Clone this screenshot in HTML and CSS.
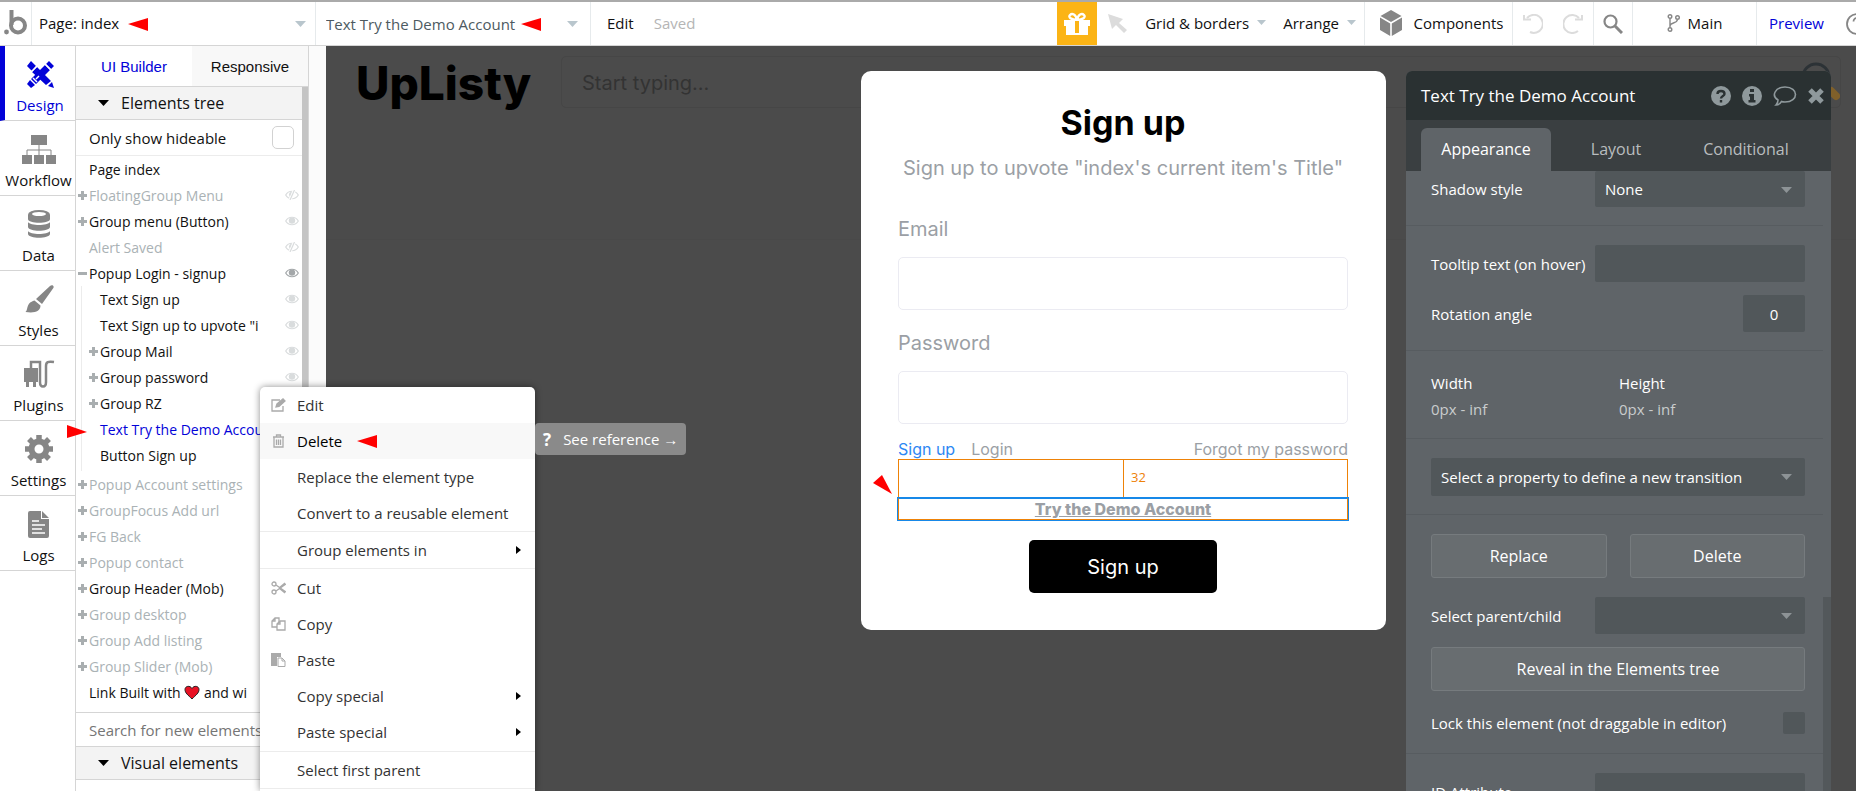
FILE: index.html
```html
<!DOCTYPE html>
<html lang="en">
<head>
<meta charset="utf-8">
<title>UpListy editor</title>
<link rel="stylesheet" href="styles.css">
</head>
<body>
<svg class="sprite" aria-hidden="true">
  <symbol id="caret" viewBox="0 0 11 6"><path d="M0 0h11L5.5 6z"/></symbol>
  <symbol id="marker" viewBox="0 0 20 13"><path d="M0 6 20 0v13z"/></symbol>
  <symbol id="plus" viewBox="0 0 9 9"><path d="M3 0h3v3h3v3H6v3H3V6H0V3h3z"/></symbol>
  <symbol id="minus" viewBox="0 0 9 9"><path d="M0 3h9v3H0z"/></symbol>
  <symbol id="eye" viewBox="0 0 14 10"><path d="M.7 5C3.500 0 10.500 0 13.300 5 10.500 10 3.500 10 .7 5z" fill="none" stroke="currentColor" stroke-width="1.200"/><circle cx="7" cy="4.600" r="3.200"/></symbol>
  <symbol id="eye-off" viewBox="0 0 14 10"><path d="M.7 5C3.500 0 10.500 0 13.300 5 10.500 10 3.500 10 .7 5z" fill="none" stroke="currentColor" stroke-width="1.200"/><path d="M4 4.500A3 3 0 0 1 7 1.800L6 7.500A3 3 0 0 1 4 4.500z"/><path d="M9.500 0 5 10" stroke="#fff" stroke-width="3"/><path d="M9.500 0 5 10" stroke="currentColor" stroke-width="1.200"/></symbol>
  <symbol id="sub" viewBox="0 0 5 8"><path d="M0 0l5 4-5 4z"/></symbol>
</svg>

<div class="app">
  <header class="topbar">
    <div class="logo">
      <svg width="24" height="26" viewBox="0 0 24 26"><circle cx="2.500" cy="22" r="2.400" fill="#868686"/><path d="M7.500 0v15" stroke="#868686" stroke-width="4" fill="none"/><circle cx="14" cy="15.500" r="7" stroke="#868686" stroke-width="4" fill="none"/></svg>
    </div>
    <div class="pick pick-page">
      <select aria-label="Page"><option>Page: index</option></select>
      <svg class="caret"><use href="#caret"/></svg>
      <svg class="marker"><use href="#marker"/></svg>
    </div>
    <div class="pick pick-element">
      <select aria-label="Element"><option>Text Try the Demo Account</option></select>
      <svg class="caret"><use href="#caret"/></svg>
      <svg class="marker"><use href="#marker"/></svg>
    </div>
    <div class="edit-group">
      <button>Edit</button>
      <span class="saved">Saved</span>
    </div>
    <div class="tools">
      <button class="gift" aria-label="Gift">
        <svg width="28" height="24" viewBox="0 0 28 24"><path fill="#fff" d="M1 8h26v6H1zM3 14h22v9H3z"/><path d="M14 8C8 8 5 5 7 3s6-1 7 5c1-6 5-7 7-5s-1 5-7 5z" fill="none" stroke="#fff" stroke-width="2.400"/><path d="M12 9h4v12h-4z" fill="#fbb416"/></svg>
      </button>
      <button class="cursor" aria-label="Select"><svg width="19" height="19" viewBox="0 0 19 19"><path fill="#dcdcdc" d="M0 0l15 5-4 4 8 7-3 3-8-8-4 4z"/></svg></button>
      <button class="menu-btn">Grid &amp; borders <svg class="small-caret"><use href="#caret"/></svg></button>
      <button class="menu-btn">Arrange <svg class="small-caret"><use href="#caret"/></svg></button>
      <button class="seg components">
        <svg width="22" height="26" viewBox="0 0 22 26"><path fill="#868686" d="M11 0l10.500 6L11 12 .5 6z"/><path fill="#868686" d="M0 7.500l10.200 6V26L0 20zM22 7.500l-10.200 6V26L22 20z"/></svg>
        Components</button>
      <div class="seg history">
        <button aria-label="Undo"><svg width="20" height="20" viewBox="0 0 20 20" fill="none" stroke="#dcdcdc" stroke-width="2"><path d="M4 4a9 9 0 1 1 3 14"/><path d="M1 1v4.500h7"/></svg></button>
        <button aria-label="Redo"><svg width="20" height="20" viewBox="0 0 20 20" fill="none" stroke="#dcdcdc" stroke-width="2"><path d="M16 4a9 9 0 1 0-1 13"/><path d="M19 1v4.500h-7"/></svg></button>
      </div>
      <button class="seg find" aria-label="Search"><svg width="20" height="20" viewBox="0 0 20 20" fill="none" stroke="#868686"><circle cx="7.500" cy="7.500" r="6" stroke-width="2.200"/><path d="M12 12l7 7" stroke-width="3"/></svg></button>
      <button class="seg branch"><svg width="13" height="18" viewBox="0 0 13 18" fill="none" stroke="#868686" stroke-width="1.400"><circle cx="3" cy="2.500" r="1.800"/><circle cx="3" cy="15.500" r="1.800"/><circle cx="10.500" cy="3.500" r="1.800"/><path d="M3 4.500v9M3 12c0-4 7-2 7.500-6.500"/></svg>Main</button>
      <a class="seg preview" href="#">Preview</a>
      <button class="help" aria-label="Help"><svg width="22" height="22" viewBox="0 0 22 22" fill="none" stroke="#868686" stroke-width="1.800"><circle cx="11" cy="11" r="10"/><path d="M7.500 8.500c0-5 7-4 7 0 0 2.500-3.500 2.500-3.500 5M11 15v2"/></svg></button>
    </div>
  </header>

  <div class="main">
    <nav class="rail">
      <a class="active" href="#"><span class="ico"><svg width="29" height="29" viewBox="0 0 29 29"><g fill="#0202d8"><path d="M5 1l5 5-4 5-5-5zM11 7l14 14-5 4L6 12zM26 22l2 6-6-2z"/><path d="M23 1l5 5-3 3-5-5zM19 5l5 5-14 14-5-5zM4 20l5 5-4 3-4-4z"/></g><path d="M7 18l4 4M10 19l3-3M19.500 4.500l5 5M5.500 11.500l5-5" stroke="#fff" stroke-width="1.500"/></svg></span>Design</a>
      <a href="#"><span class="ico"><svg width="34" height="29" viewBox="0 0 34 29" fill="#868686"><path d="M9 0h16v10H9zM0 20h10v9H0zM12 20h10v9H12zM24 20h10v9H24z"/><path d="M17 10v10M5 20v-5h24v5" fill="none" stroke="#868686"/></svg></span>Workflow</a>
      <a href="#"><span class="ico"><svg width="22" height="28" viewBox="0 0 22 28" fill="#868686"><path d="M0 5v4c0 5 22 5 22 0V5z"/><ellipse cx="11" cy="4.500" rx="11" ry="4.500"/><ellipse cx="11" cy="4" rx="7" ry="2" fill="#fff"/><path d="M0 12c2 4 20 4 22 0v5c-1 5-21 5-22 0zM0 21c2 4 20 4 22 0v3c-1 5-21 5-22 0z"/></svg></span>Data</a>
      <a href="#"><span class="ico"><svg width="30" height="28" viewBox="0 0 30 28" fill="#868686"><path d="M12 14L26 1c2-2 5 0 3 2.500L18 19zM10.500 15.500l6 5c0 6-6 8-15 6.500 3-2 0-9 9-11.500z"/></svg></span>Styles</a>
      <a href="#"><span class="ico"><svg width="32" height="28" viewBox="0 0 32 28" fill="#868686"><path d="M1 8h14v14H1zM3 20h3v7H3zM10 20h3v7h-3z"/><path d="M8 9V2h9v20c0 6 6 6 6 0V6c0-4 2-5 8-4" fill="none" stroke="#868686" stroke-width="2.500"/></svg></span>Plugins</a>
      <a href="#"><span class="ico"><svg width="28" height="28" viewBox="0 0 28 28"><circle cx="14" cy="14" r="7.500" fill="none" stroke="#868686" stroke-width="6"/><path d="M14 0v5M14 23v5M0 14h5M23 14h5M4 4l4 4M20 20l4 4M24 4l-4 4M8 20l-4 4" stroke="#868686" stroke-width="5.500"/></svg></span>Settings</a>
      <a href="#"><span class="ico"><svg width="21" height="27" viewBox="0 0 21 27" fill="#868686"><path d="M2 0h11v8h8v17a2 2 0 0 1-2 2H2a2 2 0 0 1-2-2V2a2 2 0 0 1 2-2zM14 0l7 7h-7z"/><path d="M4 10h7M4 14h13M4 18h10M4 22h13" stroke="#fff" stroke-width="1.600"/></svg></span>Logs</a>
      <svg class="marker"><use href="#marker"/></svg>
    </nav>

    <aside class="side">
      <div class="side-tabs">
        <button class="on">UI Builder</button>
        <button>Responsive</button>
      </div>
      <div class="side-body">
        <button class="section"><svg><use href="#caret"/></svg>Elements tree</button>
        <label class="hideable">Only show hideable<input type="checkbox"></label>
        <ul class="tree">
          <li>Page index</li>
          <li class="dim"><svg class="tog"><use href="#plus"/></svg>FloatingGroup Menu<svg class="eye"><use href="#eye-off"/></svg></li>
          <li><svg class="tog"><use href="#plus"/></svg>Group menu (Button)<svg class="eye"><use href="#eye"/></svg></li>
          <li class="dim">Alert Saved<svg class="eye"><use href="#eye-off"/></svg></li>
          <li><svg class="tog"><use href="#minus"/></svg>Popup Login - signup<svg class="eye strong"><use href="#eye"/></svg></li>
        </ul>
        <ul class="tree children">
          <li>Text Sign up<svg class="eye"><use href="#eye"/></svg></li>
          <li>Text Sign up to upvote "i<svg class="eye"><use href="#eye"/></svg></li>
          <li><svg class="tog"><use href="#plus"/></svg>Group Mail<svg class="eye"><use href="#eye"/></svg></li>
          <li><svg class="tog"><use href="#plus"/></svg>Group password<svg class="eye"><use href="#eye"/></svg></li>
          <li><svg class="tog"><use href="#plus"/></svg>Group RZ</li>
          <li class="selected">Text Try the Demo Accou</li>
          <li>Button Sign up</li>
        </ul>
        <ul class="tree">
          <li class="dim"><svg class="tog"><use href="#plus"/></svg>Popup Account settings</li>
          <li class="dim"><svg class="tog"><use href="#plus"/></svg>GroupFocus Add url</li>
          <li class="dim"><svg class="tog"><use href="#plus"/></svg>FG Back</li>
          <li class="dim"><svg class="tog"><use href="#plus"/></svg>Popup contact</li>
          <li><svg class="tog"><use href="#plus"/></svg>Group Header (Mob)</li>
          <li class="dim"><svg class="tog"><use href="#plus"/></svg>Group desktop</li>
          <li class="dim"><svg class="tog"><use href="#plus"/></svg>Group Add listing</li>
          <li class="dim"><svg class="tog"><use href="#plus"/></svg>Group Slider (Mob)</li>
          <li>Link Built with <svg class="heart" viewBox="0 0 16 15"><path d="M8 14C4 10 1 8 1 4.500 1 1 6 0 8 3.500 10 0 15 1 15 4.500 15 8 12 10 8 14z" fill="#e81224" stroke="#222"/></svg> and wi</li>
        </ul>
        <input class="new-search" type="text" placeholder="Search for new elements" aria-label="Search for new elements">
        <button class="section"><svg><use href="#caret"/></svg>Visual elements</button>
        <div class="visual"><svg width="16" height="12" viewBox="0 0 16 12"><path d="M0 4V0h16v4h-2V2H9v10H7V2H2v2z" fill="#777"/></svg></div>
      </div>
    </aside>

    <main class="canvas">
      <div class="page-head">
        <div class="brand">UpListy</div>
        <div class="page-search">Start typing...
          <svg width="42" height="46" viewBox="0 0 42 46" fill="none"><circle cx="18" cy="20" r="13" stroke="#2c3236" stroke-width="3"/><path d="M33 34l5 5" stroke="#80602a" stroke-width="8" stroke-linecap="round"/></svg>
        </div>
      </div>

      <form class="popup">
        <h1>Sign up</h1>
        <p class="lead">Sign up to upvote "index's current item's Title"</p>
        <label for="email">Email</label>
        <input id="email" type="email">
        <label for="password">Password</label>
        <input id="password" type="password">
        <div class="links">
          <a class="blue" href="#">Sign up</a><a href="#">Login</a><a class="forgot" href="#">Forgot my password</a>
        </div>
        <div class="spacing"><span></span><span class="gap-size">32</span></div>
        <div class="demo"><a href="#">Try the Demo Account</a></div>
        <button class="submit" type="button">Sign up</button>
        <svg class="popup-marker" viewBox="0 0 20 19"><path d="M0 8 9 0 19 19z"/></svg>
      </form>

      <section class="props">
        <header>
          <h2>Text Try the Demo Account</h2>
          <button aria-label="Help"><svg width="20" height="20" viewBox="0 0 20 20"><circle cx="10" cy="10" r="10"/><path d="M6.500 8c0-4 7-4 7 0 0 2-3.500 2-3.500 4.500M10 14v2.500" fill="none" stroke="#2a3132" stroke-width="2.400"/></svg></button>
          <button aria-label="Info"><svg width="20" height="20" viewBox="0 0 20 20"><circle cx="10" cy="10" r="10"/><path d="M8 3h4v3H8zM7 8h5v6h1.500v2.500h-7V14H8v-3.500H7z" fill="#2a3132"/></svg></button>
          <button aria-label="Comment"><svg width="24" height="20" viewBox="0 0 24 20"><path d="M12 1c14 0 14 15 0 15-1.500 0-2.500 0-3.500-.5C7 18 5 19 3 19c1.500-1.500 2-3 2-5C-2 10 2 1 12 1z" fill="none" stroke="#8f999c" stroke-width="1.600"/></svg></button>
          <button aria-label="Close"><svg width="16" height="16" viewBox="0 0 16 16"><path d="M2 2l12 12M14 2L2 14" stroke="#8f999c" stroke-width="5"/></svg></button>
        </header>
        <div class="props-tabs">
          <button class="on">Appearance</button>
          <button>Layout</button>
          <button>Conditional</button>
        </div>
        <div class="props-body">
          <div class="group first">
            <div class="row"><label for="shadow">Shadow style</label><div class="sel"><select id="shadow"><option>None</option></select><svg><use href="#caret"/></svg></div></div>
          </div>
          <div class="group">
            <div class="row"><label for="tip">Tooltip text (on hover)</label><input id="tip" type="text"></div>
            <div class="row"><label for="rot">Rotation angle</label><input id="rot" class="num" type="text" value="0"></div>
          </div>
          <div class="group sizes">
            <div><b>Width</b><span>0px - inf</span></div>
            <div><b>Height</b><span>0px - inf</span></div>
          </div>
          <div class="group">
            <div class="sel wide"><select aria-label="Transition"><option>Select a property to define a new transition</option></select><svg><use href="#caret"/></svg></div>
          </div>
          <div class="group actions">
            <div class="pair"><button class="btn">Replace</button><button class="btn">Delete</button></div>
            <div class="row after-buttons"><label for="rel">Select parent/child</label><div class="sel"><select id="rel"><option></option></select><svg><use href="#caret"/></svg></div></div>
            <button class="btn reveal">Reveal in the Elements tree</button>
            <div class="row lock"><label for="lock">Lock this element (not draggable in editor)</label><input id="lock" type="checkbox"></div>
          </div>
          <div class="group last">
            <div class="row"><label for="attr">ID Attribute</label><input id="attr" type="text"></div>
          </div>
        </div>
      </section>
    </main>

    <div class="context" role="menu">
      <div class="block">
        <button><svg class="mi" viewBox="0 0 15 14" fill="none" stroke="#aaa" stroke-width="1.300"><path d="M12 8v5H1V2h8"/><path d="M5 9l1-3 6-5 2 2-6 5.500z" fill="#aaa"/></svg>Edit</button>
        <button class="hover"><svg class="mi" viewBox="0 0 15 14" fill="none" stroke="#aaa" stroke-width="1.300"><path d="M2 3h11M3 3v10h9V3M5.500 3V1h4v2M5.500 5.500v5.500M7.500 5.500v5.500M9.500 5.500v5.500"/></svg>Delete<svg class="marker"><use href="#marker"/></svg></button>
        <button>Replace the element type</button>
        <button>Convert to a reusable element</button>
      </div>
      <div class="block">
        <button>Group elements in<svg class="sub"><use href="#sub"/></svg></button>
      </div>
      <div class="block">
        <button><svg class="mi" viewBox="0 0 15 14" fill="none" stroke="#aaa" stroke-width="1.300"><circle cx="3" cy="3" r="2"/><circle cx="3" cy="11" r="2"/><path d="M5 4l10 7M5 10l10-7M8 7l6-5M8 7l6 5"/></svg>Cut</button>
        <button><svg class="mi" viewBox="0 0 15 14" fill="none" stroke="#aaa" stroke-width="1.300"><path d="M6 10H1V4l3-3h4v4M1 4h3V1"/><path d="M6 13V7l3-3h5v9zM6 7h3V4"/></svg>Copy</button>
        <button><svg class="mi" viewBox="0 0 15 14"><path d="M0 0h10v4H6v9H0z" fill="#aaa"/><path d="M7 5h4l3 3v5.500H7zM11 5v3h3" fill="#fff" stroke="#aaa"/></svg>Paste</button>
        <button>Copy special<svg class="sub"><use href="#sub"/></svg></button>
        <button>Paste special<svg class="sub"><use href="#sub"/></svg></button>
      </div>
      <div class="block">
        <button>Select first parent</button>
      </div>
      <a class="reference" href="#"><b>?</b>See reference →</a>
    </div>
  </div>
</div>
</body>
</html>
```

FILE: styles.css
```css
* { box-sizing: border-box; }
body { margin: 0; font-family: "Open Sans", "Noto Sans", sans-serif; font-size: 15px; color: #111; overflow: hidden; }
button, select, input { font: inherit; color: inherit; }
button { background: none; border: 0; padding: 0; cursor: pointer; }
select { appearance: none; background: none; border: 0; padding: 0; border-radius: 0; }
a { color: inherit; text-decoration: none; }
ul { list-style: none; margin: 0; padding: 0; }
.sprite { display: none; }
svg { flex: none; }
.marker { width: 20px; height: 13px; fill: #f00; }
.app { height: 100vh; display: flex; flex-direction: column; }

/* top bar */
.topbar { display: flex; flex: none; height: 46px; border-top: 2px solid #aaa; border-bottom: 1px solid #d5d5d5; background: #fff; }
.logo { width: 32px; padding: 8px 4px; border-right: 1px solid #e6eaec; }
.pick { position: relative; border-right: 1px solid #e6eaec; }
.pick select { width: 100%; height: 100%; padding: 0 7px 2px; }
.pick .caret { position: absolute; right: 9px; top: 19px; width: 11px; height: 6px; fill: #b9c6cd; pointer-events: none; }
.pick .marker { position: absolute; top: 16px; }
.pick-page { width: 284px; }
.pick-page .marker { left: 96px; }
.pick-element { width: 275px; color: #4d5a61; }
.pick-element select { padding: 0 10px; }
.pick-element .caret { right: 12px; }
.pick-element .marker { left: 205px; }
.edit-group { display: flex; align-items: center; gap: 20px; padding: 0 0 2px 16px; }
.saved { color: #b5b5b5; }
.tools { display: flex; margin-left: auto; white-space: nowrap; }
.tools > * { display: flex; align-items: center; }
.gift { width: 40px; justify-content: center; background: #fbb416; }
.cursor { padding: 0 18px 0 11px; }
.menu-btn { gap: 8px; padding: 0 17px 2px 0; }
.menu-btn + .menu-btn { padding-right: 8px; }
.small-caret { width: 9px; height: 5px; fill: #b9c6cd; }
.seg { border-left: 1px solid #e6eaec; justify-content: center; }
.components { gap: 12px; width: 148px; padding: 0 0 2px 6px; }
.history { gap: 20px; width: 81px; }
.history svg { display: block; }
.find { width: 39px; }
.branch { gap: 8px; width: 124px; padding-bottom: 2px; }
.preview { width: 90px; padding: 0 10px 2px 0; color: #0202d8; }
.help { width: 10px; overflow: hidden; justify-content: flex-start; }

.main { position: relative; display: flex; flex: 1; min-height: 0; background: #fbfbfb; }

/* left rail */
.rail { position: relative; flex: none; width: 76px; border-right: 1px solid #d5d5d5; background: #fff; }
.rail a { display: flex; flex-direction: column; align-items: center; height: 75px; padding: 12px 0 0 2px; border-bottom: 1px solid #d5d5d5; line-height: 20px; }
.rail a.active { border-left: 5px solid #0202d8; color: #0202d8; padding-left: 0; }
.rail .ico { display: grid; place-items: center; height: 32px; margin-bottom: 5px; }
.rail .marker { position: absolute; left: 67px; top: 379px; transform: rotate(180deg); z-index: 2; }

/* elements panel */
.side { flex: none; width: 233px; border-right: 1px solid #d5d5d5; display: flex; flex-direction: column; overflow: hidden; background: #fff; }
.side-tabs { display: grid; grid-template-columns: 1fr 1fr; flex: none; height: 41px; border-bottom: 1px solid #d5d5d5; font-family: "Liberation Sans", Arial, sans-serif; }
.side-tabs button { background: #f8f8f8; }
.side-tabs .on { background: #fff; color: #0202d8; }
.side-body { flex: 1; border-right: 6px solid #c4c4c4; }
.section { display: flex; align-items: center; gap: 12px; width: 100%; height: 33px; padding-left: 22px; background: #f3f3f3; border-bottom: 1px solid #d5d5d5; font-size: 16px; }
.section svg { width: 11px; height: 6px; }
.hideable { display: flex; align-items: center; justify-content: space-between; height: 36px; padding: 0 8px 0 13px; border-bottom: 1px solid #ececec; }
.hideable input { appearance: none; width: 22px; height: 23px; margin: 0; border: 1px solid #d2d2d2; border-radius: 5px; background: #fff; }
.tree li { position: relative; display: flex; align-items: center; height: 26px; padding-left: 13px; font-size: 14px; white-space: pre; }
.tree .dim { color: #aab2b5; }
.tree .selected { color: #0202d8; }
.tog { position: absolute; left: 2px; width: 9px; height: 9px; fill: #a9aeb0; }
.eye { width: 14px; height: 10px; margin-left: auto; margin-right: 3px; fill: #d9dcdd; color: #d9dcdd; }
.eye.strong { fill: #a3a7a9; color: #a3a7a9; }
.children { margin-left: 5px; padding-bottom: 3px; border-left: 1px solid #ececec; }
.children li { padding-left: 18px; }
.children .tog { left: 7px; }
.heart { width: 16px; height: 15px; }
.new-search { display: block; width: 100%; height: 35px; margin-top: 7px; padding: 0 13px; border: 1px solid #d5d5d5; border-width: 1px 0; outline: 0; }
.new-search::placeholder { color: #757575; }
.visual { padding: 7px 13px; }

/* canvas */
.canvas { position: relative; flex: 1; min-width: 0; margin-left: 17px; background: #4b4b4b; overflow: hidden; }
.page-head { display: flex; height: 194px; padding: 10px 15px 0 30px; border-bottom: 1px solid #494949; }
.brand { width: 205px; font: 800 46px/54px Inter, sans-serif; color: #000; }
.page-search { display: flex; justify-content: space-between; flex: 1; height: 52px; padding: 0 0 0 20px; border: 1px solid #464646; border-radius: 5px; color: #333; font: 20px/52px Inter, sans-serif; }

/* sign-up popup */
.popup { position: absolute; left: 535px; top: 25px; width: 525px; padding: 34px 38px 37px 37px; border-radius: 10px; background: #fff; display: flex; flex-direction: column; font-family: Inter, sans-serif; color: #9b9fa5; }
.popup h1 { margin: 0; font-size: 34px; line-height: 36px; text-align: center; color: #000; }
.popup .lead { margin: 15px 0 37px; font-size: 20px; line-height: 24px; text-align: center; white-space: nowrap; }
.popup label { font-size: 20px; line-height: 24px; }
.popup input { height: 53px; margin: 16px 0 21px; border: 1px solid #ebebf2; border-radius: 5px; }
.popup #password { margin-bottom: 15px; }
.links { display: flex; gap: 16px; font-size: 16px; line-height: 20px; }
.links .blue { color: #2d87f3; }
.links .forgot { margin-left: auto; }
.spacing { display: grid; grid-template-columns: 1fr 1fr; height: 39px; border: 1px solid #ee8208; border-bottom: 0; }
.gap-size { border-left: 1px solid #ee8208; padding-left: 7px; font: 13px/34px "Open Sans", sans-serif; color: #ee8208; }
.demo { height: 22px; border: 1px solid #ee8208; border-top-color: #1788e8; outline: 1px solid #1788e8; font-size: 16px; line-height: 21px; font-weight: 800; text-align: center; text-decoration: underline; }
.submit { width: 188px; height: 53px; margin: 20px auto 0; border-radius: 5px; background: #000; color: #fff; font-size: 20px; }
.popup-marker { position: absolute; left: 12px; top: 404px; width: 20px; height: 19px; fill: #f00; }

/* property window */
.props { position: absolute; right: 25px; top: 25px; bottom: 0; width: 425px; display: flex; flex-direction: column; border-radius: 6px 6px 0 0; background: #5f6468; color: #fff; overflow: hidden; }
.props header { display: flex; align-items: center; gap: 11px; flex: none; height: 49px; padding: 0 7px 0 15px; background: #2a3132; }
.props h2 { flex: 1; margin: 0; font-size: 17px; font-weight: 400; }
.props header svg { display: block; fill: #8f999c; }
.props-tabs { display: flex; flex: none; height: 51px; padding: 8px 15px 0; background: #3a3f41; font-size: 16px; color: #b9bdbf; }
.props-tabs button { width: 130px; padding-bottom: 2px; border-radius: 6px 6px 0 0; }
.props-tabs .on { background: #5f6468; color: #fff; }
.props-body { flex: 1; min-height: 0; overflow: hidden; background: linear-gradient(#53585b, #53585b) right 0 top 426px / 8px 400px no-repeat; }
.group { margin-right: 8px; padding: 19px 18px 18px 25px; border-bottom: 1px solid #575c60; }
.group.first { padding-top: 0; }
.group.actions { padding-bottom: 12px; }
.group.last { border-bottom: 0; }
.row { display: flex; align-items: center; justify-content: space-between; min-height: 37px; }
.row + .row { margin-top: 13px; }
.row input, .sel { width: 210px; height: 37px; border: 0; border-radius: 2px; background: #51575a; }
.row .num { width: 62px; text-align: center; }
.sel { position: relative; }
.sel select { width: 100%; height: 100%; padding: 0 10px; }
.sel select option { background: #51575a; }
.sel svg { position: absolute; right: 13px; top: 16px; width: 11px; height: 6px; fill: #8d9396; pointer-events: none; }
.first .row, .first .sel { height: 36px; min-height: 0; }
.sel.wide { width: 100%; height: 38px; }
.sizes { display: grid; grid-template-columns: 188px 1fr; padding-bottom: 16px; line-height: 26px; }
.sizes b, .sizes span { display: block; font-weight: 400; }
.sizes span { color: #c9cccd; }
.pair { display: grid; grid-template-columns: 1fr 1fr; gap: 23px; }
.btn { height: 44px; border: 1px solid #767b7e; border-radius: 3px; background: #686d70; font-size: 16px; }
.after-buttons { margin-top: 19px; }
.reveal { width: 100%; margin-top: 13px; }
.lock { margin-top: 13px; }
.row.lock input { appearance: none; width: 22px; height: 22px; margin: 0; }

/* context menu */
.context { position: absolute; left: 260px; top: 341px; bottom: 0; width: 275px; border-radius: 5px 5px 0 0; background: #fff; box-shadow: 0 0 7px rgba(0, 0, 0, .45); color: #333; }
.block { border-bottom: 1px solid #ececec; }
.block:nth-child(3) { padding: 1px 0; }
.context button { display: flex; align-items: center; position: relative; width: 100%; height: 36px; padding: 0 14px 0 37px; text-align: left; }
.context .hover { background: #f8f8f8; color: #000; gap: 15px; }
.mi { position: absolute; left: 11px; width: 15px; height: 14px; }
.sub { width: 5px; height: 8px; margin-left: auto; fill: #000; }
.reference { position: absolute; left: 100%; top: 36px; display: flex; align-items: center; gap: 12px; height: 32px; padding: 0 8px; border-radius: 4px; background: #8a8a8a; color: #fff; white-space: nowrap; }
.reference b { font-size: 17px; }
```
